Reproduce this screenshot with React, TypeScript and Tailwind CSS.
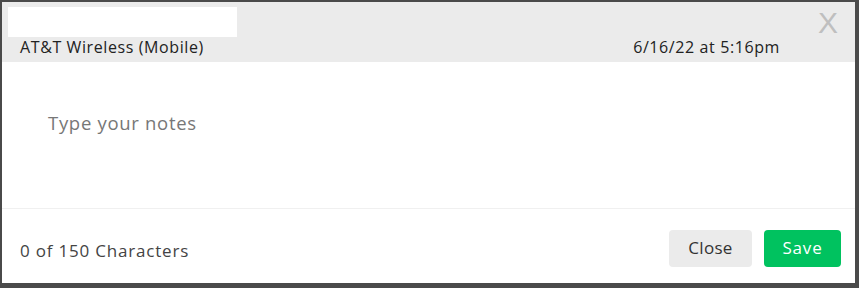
import React from 'react';

const font = { fontFamily: '"Open Sans", "Noto Sans", "Liberation Sans", sans-serif' };

export default function App() {
    return (
        <div className="w-[859px] h-[288px] bg-[#4a4a4a] pt-[2px] pl-[2px] pr-[4px] pb-[5px]" style={font}>
            <div className="flex h-full flex-col bg-white">
                {/* header */}
                <div className="relative h-[60px] bg-[#ebebeb] pl-[6px] pt-[5px]">
                    <div className="h-[30px] w-[229px] bg-white" />
                    <div className="flex items-center justify-between pl-[12px] pr-[75px] text-[16px] leading-[20px] tracking-[0.6px] text-[#222222]">
                        <span>AT&amp;T Wireless (Mobile)</span>
                        <span>6/16/22 at 5:16pm</span>
                    </div>
                    <button
                        type="button"
                        className="absolute right-[17px] top-[4px] font-['Liberation_Sans',sans-serif] text-[30px] leading-[34px] text-[#bfbfbf]"
                        title="Close"
                    >
                        X
                    </button>
                </div>

                {/* notes */}
                <div className="h-[147px] border-b border-[#f0f0f0] pl-[46px] pt-[49px]">
                    <p className="text-[18.5px] leading-[24px] tracking-[0.7px] text-[#777777]">Type your notes</p>
                </div>

                {/* footer */}
                <div className="flex flex-1 items-center justify-between pl-[18px] pr-[14px] pt-[4px]">
                    <span className="pt-[6px] text-[17px] tracking-[0.8px] text-[#444444]">0 of 150 Characters</span>
                    <div className="flex gap-[12px]">
                        <button
                            type="button"
                            className="h-[37px] w-[83px] rounded-[4px] bg-[#ebebeb] text-[17px] tracking-[0.3px] text-[#333333]"
                        >
                            Close
                        </button>
                        <button
                            type="button"
                            className="h-[37px] w-[77px] rounded-[4px] bg-[#00c25f] text-[17px] tracking-[0.8px] text-white"
                        >
                            Save
                        </button>
                    </div>
                </div>
            </div>
        </div>
    );
}
